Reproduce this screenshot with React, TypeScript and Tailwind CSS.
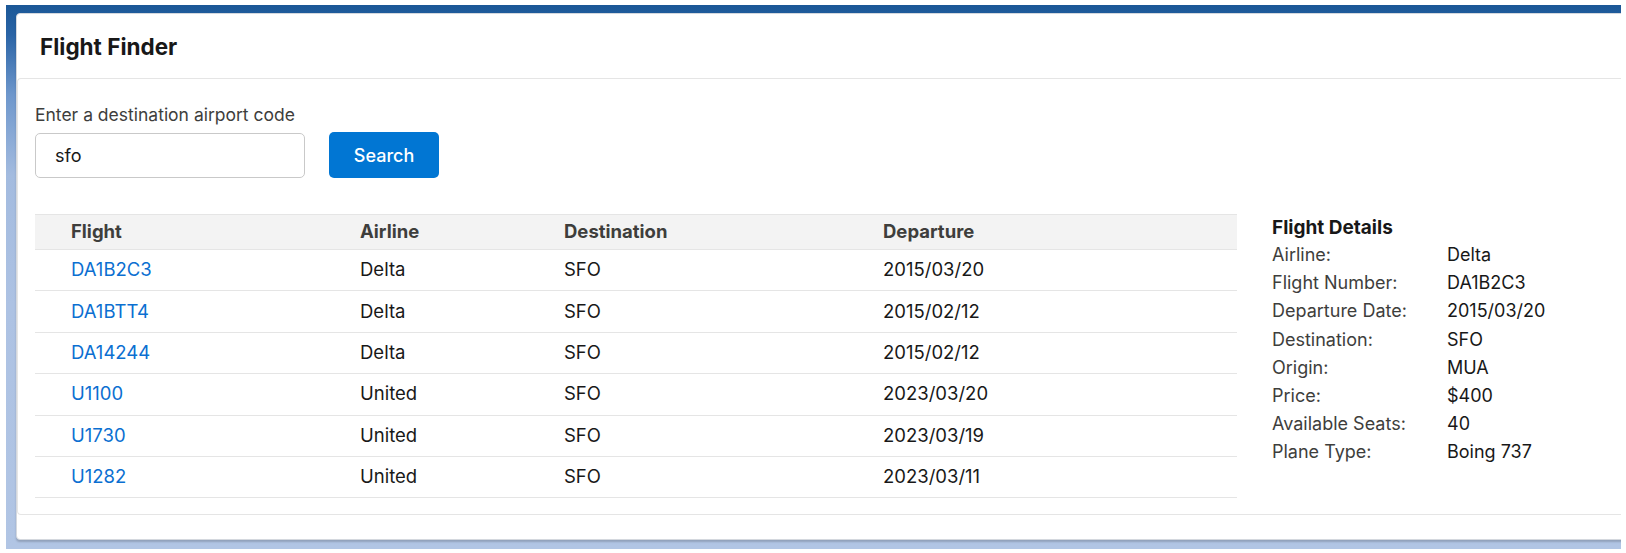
import React from "react";

const flights = [
  { id: "DA1B2C3", airline: "Delta", dest: "SFO", dep: "2015/03/20" },
  { id: "DA1BTT4", airline: "Delta", dest: "SFO", dep: "2015/02/12" },
  { id: "DA14244", airline: "Delta", dest: "SFO", dep: "2015/02/12" },
  { id: "U1100", airline: "United", dest: "SFO", dep: "2023/03/20" },
  { id: "U1730", airline: "United", dest: "SFO", dep: "2023/03/19" },
  { id: "U1282", airline: "United", dest: "SFO", dep: "2023/03/11" },
];

const details: [string, string][] = [
  ["Airline:", "Delta"],
  ["Flight Number:", "DA1B2C3"],
  ["Departure Date:", "2015/03/20"],
  ["Destination:", "SFO"],
  ["Origin:", "MUA"],
  ["Price:", "$400"],
  ["Available Seats:", "40"],
  ["Plane Type:", "Boing 737"],
];

export default function App() {
  return (
    <div
      className="w-[1626px] h-[553px] bg-white pt-[5px] pl-[6px] overflow-hidden"
      style={{ fontFamily: "Inter, 'Noto Sans', 'Liberation Sans', sans-serif" }}
    >
      <div className="w-[1615px] h-[544px] overflow-hidden pt-[8px] pl-[10px] bg-[linear-gradient(180deg,#1b5797_0px,#2a64a6_30px,#6e97cc_90px,#a3bbdf_170px,#adc2e3_300px,#b1c5e4_100%)]">
        <div className="w-[1650px] h-[527px] bg-white rounded-[4px] border border-[#d4d8de] shadow-[0_2px_2px_rgba(0,0,0,0.18)] flex flex-col">
          <header className="h-[64px] flex-none flex items-center pl-[23px] pt-[2px]">
            <h1 className="text-[22.5px] font-bold text-[#181818]">Flight Finder</h1>
          </header>
          <div className="h-[437px] flex-none border border-r-0 border-[#e5e5e5] rounded-l-[4px] pl-[17px] pt-[25px]">
            <label className="block text-[17.5px] leading-[22px] text-[#3e3e3c]">
              Enter a destination airport code
            </label>
            <div className="flex items-center gap-[24px] mt-[6px]">
              <div className="w-[270px] h-[45px] border border-[#c9c9c9] rounded-[5px] flex items-center pl-[19px] text-[18px] text-[#181818]">
                sfo
              </div>
              <button className="w-[110px] h-[46px] rounded-[5px] bg-[#0176d3] text-white text-[18px] font-medium">
                Search
              </button>
            </div>
            <div className="flex mt-[36px]">
              <div className="w-[1202px] flex-none">
                <div className="grid grid-cols-[325px_204px_319px_1fr] h-[36px] items-center bg-[#f3f3f3] border-t border-b border-[#e5e5e5] text-[18.5px] font-bold text-[#3e3e3c]">
                  <div className="pl-[36px]">Flight</div>
                  <div>Airline</div>
                  <div>Destination</div>
                  <div>Departure</div>
                </div>
                {flights.map((f) => (
                  <div
                    key={f.id}
                    className="grid grid-cols-[325px_204px_319px_1fr] h-[41.4px] items-center border-b border-[#e5e5e5] text-[18.5px] text-[#181818]"
                  >
                    <div className="pl-[36px] text-[#0b6fd1]">{f.id}</div>
                    <div>{f.airline}</div>
                    <div>{f.dest}</div>
                    <div>{f.dep}</div>
                  </div>
                ))}
              </div>
              <div className="ml-[35px] mt-[2px]">
                <div className="text-[19px] leading-[24px] font-bold text-[#181818]">Flight Details</div>
                <div className="mt-[1px]">
                  {details.map(([k, v]) => (
                    <div key={k} className="flex text-[18px] leading-[28.2px]">
                      <div className="w-[175px] text-[#3e3e3c]">{k}</div>
                      <div className="text-[#181818]">{v}</div>
                    </div>
                  ))}
                </div>
              </div>
            </div>
          </div>
        </div>
      </div>
    </div>
  );
}
